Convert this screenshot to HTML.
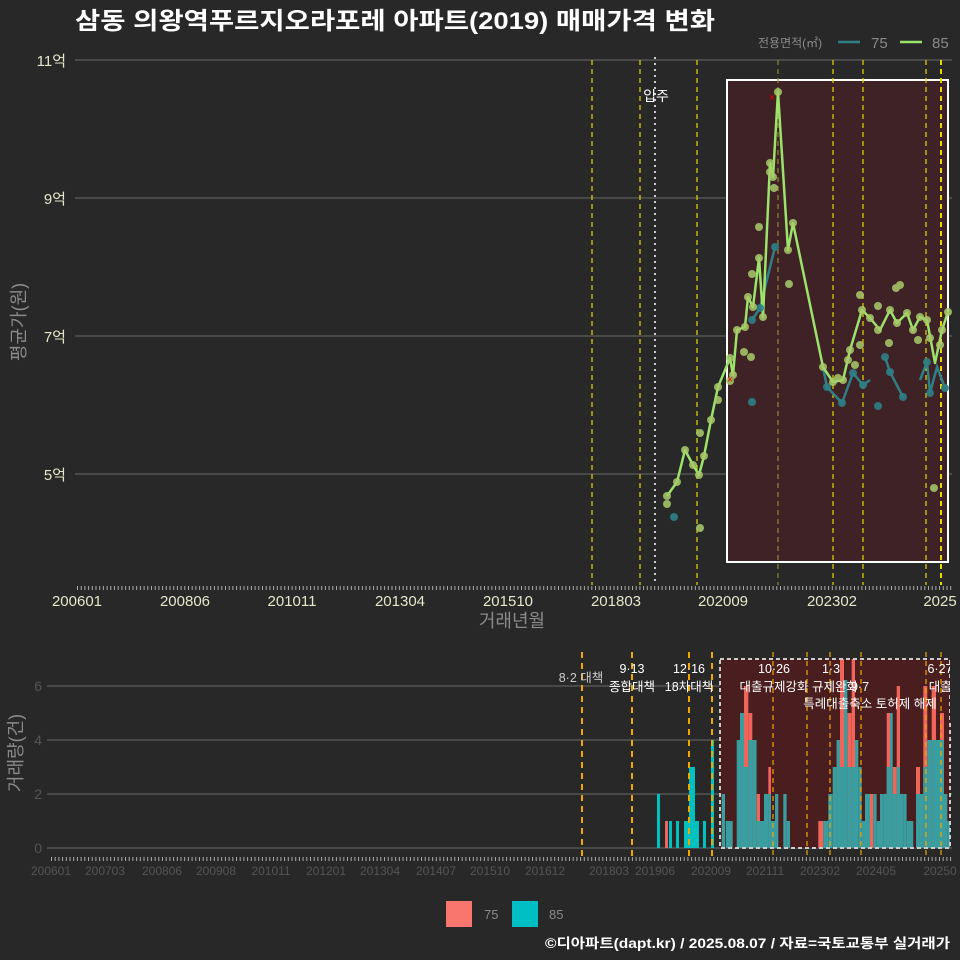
<!DOCTYPE html>
<html><head><meta charset="utf-8"><style>
html,body{margin:0;padding:0;background:#282828;}
svg{display:block;font-family:"Liberation Sans","Noto Sans CJK KR",sans-serif;}
</style></head><body>
<svg width="960" height="960" viewBox="0 0 960 960" xmlns="http://www.w3.org/2000/svg">
<rect width="960" height="960" fill="#282828"/>
<text x="75" y="29" font-size="24" font-weight="bold" fill="#ffffff" textLength="640" lengthAdjust="spacingAndGlyphs">삼동 의왕역푸르지오라포레 아파트(2019) 매매가격 변화</text>
<text x="758" y="47" font-size="12" fill="#8a8a8a">전용면적(㎡)</text>
<line x1="838" y1="42" x2="860" y2="42" stroke="#2e7f86" stroke-width="2.5"/>
<text x="871" y="48" font-size="15" fill="#8a8a8a">75</text>
<line x1="900" y1="42" x2="922" y2="42" stroke="#9be36b" stroke-width="2.5"/>
<text x="932" y="48" font-size="15" fill="#8a8a8a">85</text>

<g stroke="#6a6a6a" stroke-width="1">
<line x1="75" y1="60" x2="952" y2="60"/><line x1="75" y1="198" x2="952" y2="198"/>
<line x1="75" y1="336" x2="952" y2="336"/><line x1="75" y1="474" x2="952" y2="474"/>
</g>
<g font-size="15" fill="#e6e6c8" text-anchor="end">
<text x="66" y="66">11억</text><text x="66" y="204">9억</text><text x="66" y="342">7억</text><text x="66" y="480">5억</text>
</g>
<rect x="727" y="80" width="221" height="482" fill="#3e2226" stroke="#ffffff" stroke-width="2"/>
<g stroke="#e6d800" stroke-width="1.2" stroke-dasharray="5,4">
<line x1="592" y1="60" x2="592" y2="585"/><line x1="640" y1="60" x2="640" y2="585"/>
<line x1="697" y1="60" x2="697" y2="585"/><line x1="778" y1="60" x2="778" y2="585" stroke="#8a8a30"/>
<line x1="833" y1="60" x2="833" y2="585"/><line x1="863" y1="60" x2="863" y2="585"/>
<line x1="926" y1="60" x2="926" y2="585"/><line x1="941" y1="60" x2="941" y2="585" stroke-width="2"/>
</g>
<line x1="655" y1="57" x2="655" y2="585" stroke="#cccccc" stroke-width="2" stroke-dasharray="2,4"/>
<text x="656" y="101" font-size="14" fill="#ffffff" text-anchor="middle">입주</text>
<polyline fill="none" stroke="#2e7f86" stroke-width="2.5" points="752,320 760,308 775,247"/>
<polyline fill="none" stroke="#2e7f86" stroke-width="2.5" points="823,367 827,387 842,403 853,373 863,385 870,380"/>
<polyline fill="none" stroke="#2e7f86" stroke-width="2.5" points="885,357 890,372 903,397"/>
<polyline fill="none" stroke="#2e7f86" stroke-width="2.5" points="920,380 927,362 930,393 937,367 945,388"/>
<polyline fill="none" stroke="#9be36b" stroke-width="2.5" stroke-linejoin="round" points="667,496 677,482 685,450 693,465 699,475 704,456 711,420 718,387 730,358 733,375 737,330 745,327 748,297 753,307 759,258 763,317 770,163 773,177 778,92 788,250 793,223 823,367 833,382 843,380 850,350 862,310 870,318 880,330 890,310 897,323 907,313 913,330 920,317 927,320 935,363 942,330 948,312"/>
<g fill="#2e7f86" opacity="0.9">
<circle cx="674" cy="517" r="4"/><circle cx="752" cy="402" r="4"/><circle cx="752" cy="320" r="4"/><circle cx="775" cy="247" r="4"/><circle cx="760" cy="308" r="4"/>
<circle cx="827" cy="387" r="4"/><circle cx="842" cy="403" r="4"/><circle cx="853" cy="373" r="4"/><circle cx="863" cy="385" r="4"/><circle cx="885" cy="357" r="4"/><circle cx="890" cy="372" r="4"/><circle cx="903" cy="397" r="4"/><circle cx="878" cy="406" r="4"/><circle cx="927" cy="362" r="4"/><circle cx="930" cy="393" r="4"/><circle cx="945" cy="388" r="4"/>
</g>
<g fill="#a8cc6a" opacity="0.85">
<circle cx="667" cy="496" r="4"/><circle cx="667" cy="504" r="4"/><circle cx="677" cy="482" r="4"/><circle cx="685" cy="450" r="4"/><circle cx="693" cy="465" r="4"/><circle cx="699" cy="475" r="4"/><circle cx="700" cy="433" r="4"/><circle cx="700" cy="528" r="4"/><circle cx="704" cy="456" r="4"/><circle cx="711" cy="420" r="4"/><circle cx="718" cy="387" r="4"/><circle cx="718" cy="400" r="4"/><circle cx="730" cy="358" r="4"/><circle cx="730" cy="381" r="4"/><circle cx="733" cy="375" r="4"/><circle cx="737" cy="330" r="4"/><circle cx="745" cy="327" r="4"/><circle cx="744" cy="352" r="4"/><circle cx="748" cy="297" r="4"/><circle cx="752" cy="274" r="4"/><circle cx="753" cy="307" r="4"/><circle cx="759" cy="258" r="4"/><circle cx="759" cy="227" r="4"/><circle cx="751" cy="357" r="4"/><circle cx="763" cy="317" r="4"/><circle cx="770" cy="163" r="4"/><circle cx="770" cy="172" r="4"/><circle cx="773" cy="177" r="4"/><circle cx="774" cy="188" r="4"/><circle cx="778" cy="92" r="4"/><circle cx="788" cy="250" r="4"/><circle cx="789" cy="284" r="4"/><circle cx="793" cy="223" r="4"/>
<circle cx="823" cy="367" r="4"/><circle cx="833" cy="382" r="4"/><circle cx="843" cy="380" r="4"/><circle cx="838" cy="378" r="4"/><circle cx="848" cy="360" r="4"/><circle cx="850" cy="350" r="4"/><circle cx="855" cy="365" r="4"/><circle cx="860" cy="345" r="4"/><circle cx="862" cy="310" r="4"/><circle cx="860" cy="295" r="4"/><circle cx="870" cy="318" r="4"/><circle cx="878" cy="306" r="4"/><circle cx="878" cy="330" r="4"/><circle cx="889" cy="343" r="4"/><circle cx="890" cy="310" r="4"/><circle cx="897" cy="323" r="4"/><circle cx="896" cy="288" r="4"/><circle cx="900" cy="285" r="4"/><circle cx="907" cy="313" r="4"/><circle cx="913" cy="330" r="4"/><circle cx="918" cy="340" r="4"/><circle cx="920" cy="317" r="4"/><circle cx="927" cy="320" r="4"/><circle cx="930" cy="338" r="4"/><circle cx="934" cy="488" r="4"/><circle cx="942" cy="330" r="4"/><circle cx="948" cy="312" r="4"/><circle cx="940" cy="345" r="4"/>
</g>
<text x="772" y="101" font-size="11" fill="#e00000" text-anchor="middle">×</text>
<text x="730" y="383" font-size="11" fill="#e00000" text-anchor="middle">×</text>
<line x1="77" y1="588" x2="952" y2="588" stroke="#aaaaaa" stroke-width="4" stroke-dasharray="1,2.7"/>
<g font-size="15" fill="#e6e6c8" text-anchor="middle">
<text x="77" y="606">200601</text><text x="185" y="606">200806</text><text x="292" y="606">201011</text><text x="400" y="606">201304</text><text x="508" y="606">201510</text><text x="616" y="606">201803</text><text x="723" y="606">202009</text><text x="832" y="606">202302</text><text x="940" y="606">2025</text>
</g>
<text x="512" y="627" font-size="18" fill="#8a8a8a" text-anchor="middle">거래년월</text>
<text transform="translate(25,322) rotate(-90)" font-size="18" fill="#8a8a8a" text-anchor="middle">평균가(원)</text>

<g stroke="#6a6a6a" stroke-width="1">
<line x1="47" y1="848" x2="952" y2="848"/><line x1="47" y1="794" x2="952" y2="794"/>
<line x1="47" y1="740" x2="952" y2="740"/><line x1="47" y1="686" x2="952" y2="686"/>
</g>
<g font-size="14" fill="#555555" text-anchor="end">
<text x="42" y="853">0</text><text x="42" y="799">2</text><text x="42" y="745">4</text><text x="42" y="691">6</text>
</g>
<rect x="720" y="659" width="230" height="189" fill="#4a1e1e"/>
<g fill="#00c0c0">
<rect x="657" y="794" width="3" height="54"/><rect x="669" y="821" width="3" height="27"/><rect x="676" y="821" width="3" height="27"/><rect x="684" y="821" width="5" height="27"/><rect x="689" y="767" width="3" height="81"/><rect x="692" y="767" width="3" height="81"/><rect x="695" y="821" width="4" height="27"/><rect x="703" y="821" width="3" height="27"/><rect x="711" y="740" width="3" height="108"/>
</g>
<rect x="665" y="821" width="3" height="27" fill="#f0645a"/>
<g fill="#f0645a">
<rect x="744" y="686" width="4.3" height="162"/><rect x="748.3" y="713" width="4" height="135"/><rect x="756.7" y="794" width="3.3" height="54"/><rect x="768.3" y="767" width="2.7" height="81"/><rect x="818.3" y="821" width="5" height="27"/><rect x="836.7" y="740" width="3.3" height="108"/><rect x="840" y="659" width="4" height="189"/><rect x="847.3" y="713" width="4.3" height="135"/><rect x="851.7" y="659" width="3.3" height="189"/><rect x="870" y="794" width="3.3" height="54"/><rect x="886.7" y="713" width="3.3" height="135"/><rect x="892.7" y="767" width="4" height="81"/><rect x="896.7" y="686" width="3.3" height="162"/><rect x="916" y="767" width="4" height="81"/><rect x="923.3" y="686" width="4" height="162"/><rect x="931.7" y="686" width="4.3" height="162"/><rect x="940" y="713" width="4" height="135"/>
</g>
<g fill="#3a9ea0">
<rect x="721.7" y="794" width="3.3" height="54"/><rect x="725.7" y="821" width="7" height="27"/><rect x="736.7" y="740" width="3.3" height="108"/><rect x="740" y="713" width="4" height="135"/><rect x="744" y="767" width="4.3" height="81"/><rect x="748.3" y="740" width="4" height="108"/><rect x="752.3" y="740" width="4.3" height="108"/><rect x="756.7" y="821" width="3.3" height="27"/><rect x="760" y="821" width="4" height="27"/><rect x="764" y="794" width="4.3" height="54"/><rect x="768.3" y="794" width="2.7" height="54"/><rect x="771" y="821" width="4" height="27"/><rect x="775" y="794" width="3.3" height="54"/><rect x="783.3" y="794" width="3.3" height="54"/><rect x="786.7" y="821" width="3.3" height="27"/>
<rect x="823.3" y="821" width="5" height="27"/><rect x="828.3" y="794" width="4.3" height="54"/><rect x="832.7" y="767" width="4" height="81"/><rect x="836.7" y="740" width="3.3" height="108"/><rect x="840" y="767" width="4" height="81"/><rect x="844" y="680" width="3.3" height="168"/><rect x="847.3" y="767" width="4.3" height="81"/><rect x="851.7" y="767" width="3.3" height="81"/><rect x="855" y="740" width="3.3" height="108"/><rect x="858.3" y="767" width="3.3" height="81"/><rect x="861.7" y="821" width="3.3" height="27"/><rect x="865" y="794" width="5" height="54"/><rect x="873.3" y="794" width="3.3" height="54"/><rect x="876.7" y="821" width="3.3" height="27"/><rect x="880" y="794" width="3.3" height="54"/><rect x="883.3" y="794" width="3.3" height="54"/><rect x="886.7" y="767" width="3.3" height="81"/><rect x="890" y="713" width="2.7" height="135"/><rect x="892.7" y="794" width="4" height="54"/><rect x="896.7" y="767" width="3.3" height="81"/><rect x="900" y="794" width="3.3" height="54"/><rect x="903.3" y="794" width="3.3" height="54"/><rect x="906.7" y="821" width="3.3" height="27"/><rect x="910" y="821" width="3.3" height="27"/><rect x="916" y="794" width="4" height="54"/><rect x="920" y="794" width="3.3" height="54"/><rect x="923.3" y="767" width="4" height="81"/><rect x="927.3" y="740" width="4.3" height="108"/><rect x="931.7" y="740" width="4.3" height="108"/><rect x="936" y="740" width="4" height="108"/><rect x="940" y="740" width="4" height="108"/><rect x="944" y="794" width="3.3" height="54"/><rect x="947.3" y="821" width="2.7" height="27"/>
</g>
<rect x="720" y="659" width="230" height="189" fill="none" stroke="#cccccc" stroke-width="2" stroke-dasharray="4,3"/>
<g stroke="#f0a800" stroke-width="2" stroke-dasharray="6,5">
<line x1="582" y1="652" x2="582" y2="857"/><line x1="632" y1="652" x2="632" y2="857"/><line x1="689" y1="652" x2="689" y2="857"/><line x1="712" y1="652" x2="712" y2="857"/>
</g>
<g stroke="#f0a800" stroke-width="1.2" stroke-dasharray="5,4">
<line x1="773" y1="652" x2="773" y2="857"/><line x1="807" y1="652" x2="807" y2="857"/><line x1="830" y1="652" x2="830" y2="857"/><line x1="861" y1="652" x2="861" y2="857"/><line x1="926" y1="652" x2="926" y2="857"/><line x1="941" y1="652" x2="941" y2="857"/>
</g>
<g font-size="12.5" fill="#ffffff" text-anchor="middle">
<text x="581" y="682" fill="#cccccc">8·2 대책</text>
<text x="632" y="673">9·13</text><text x="632" y="691">종합대책</text>
<text x="689" y="673">12·16</text><text x="689" y="691">18차대책</text>
<text x="774" y="673">10·26</text><text x="774" y="691">대출규제강화</text>
<text x="831" y="673">1·3</text><text x="835" y="691">규제완화</text><text x="860" y="691">9·7</text>
<text x="870" y="708">특례대출축소 토허제 해제</text>
<text x="940" y="673">6·27</text><text x="946" y="691">대출규</text>
</g>
<rect x="950" y="640" width="10" height="80" fill="#282828"/>
<line x1="51" y1="859" x2="952" y2="859" stroke="#aaaaaa" stroke-width="4" stroke-dasharray="1,2.7"/>
<g font-size="12" fill="#555555" text-anchor="middle">
<text x="51" y="875">200601</text><text x="105" y="875">200703</text><text x="162" y="875">200806</text><text x="216" y="875">200908</text><text x="271" y="875">201011</text><text x="326" y="875">201201</text><text x="380" y="875">201304</text><text x="436" y="875">201407</text><text x="490" y="875">201510</text><text x="545" y="875">201612</text><text x="609" y="875">201803</text><text x="655" y="875">201906</text><text x="711" y="875">202009</text><text x="765" y="875">202111</text><text x="820" y="875">202302</text><text x="876" y="875">202405</text><text x="940" y="875">20250</text>
</g>
<text transform="translate(22,753) rotate(-90)" font-size="18" fill="#8a8a8a" text-anchor="middle">거래량(건)</text>

<rect x="446" y="901" width="26" height="26" fill="#f8766d"/>
<text x="484" y="919" font-size="13" fill="#8a8a8a">75</text>
<rect x="512" y="901" width="26" height="26" fill="#00bfc4"/>
<text x="549" y="919" font-size="13" fill="#8a8a8a">85</text>
<text x="545" y="948" font-size="13.5" font-weight="bold" fill="#ffffff" textLength="405" lengthAdjust="spacingAndGlyphs">©디아파트(dapt.kr) / 2025.08.07 / 자료=국토교통부 실거래가</text>
</svg>
</body></html>
